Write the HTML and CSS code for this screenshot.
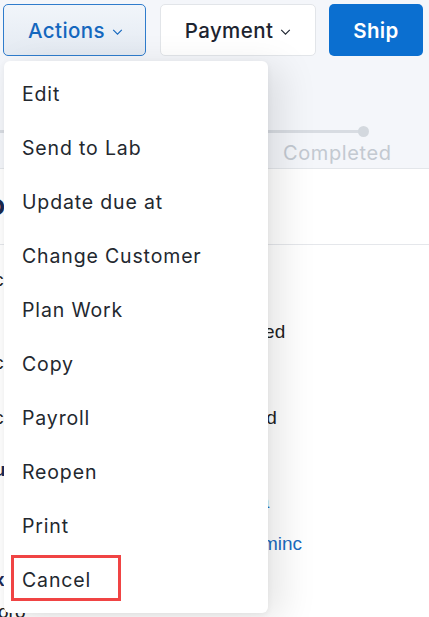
FILE: index.html
```html
<!DOCTYPE html>
<html>
<head>
<meta charset="utf-8">
<link rel="stylesheet" href="styles.css">
</head>
<body>
<div class="page">
  <header class="topbar">
    <div class="toolbar">
      <div class="actions-wrap">
        <button class="btn btn-actions">Actions<svg class="chev" viewBox="0 0 12 7" width="11" height="6"><path d="M1 1l5 5 5-5" fill="none" stroke="currentColor" stroke-width="1.3"/></svg></button>
        <div class="menu">
          <div class="item">Edit</div>
          <div class="item">Send to Lab</div>
          <div class="item">Update due at</div>
          <div class="item">Change Customer</div>
          <div class="item">Plan Work</div>
          <div class="item">Copy</div>
          <div class="item">Payroll</div>
          <div class="item">Reopen</div>
          <div class="item">Print</div>
          <div class="item item-cancel">Cancel<span class="highlight"></span></div>
        </div>
      </div>
      <button class="btn btn-payment">Payment<svg class="chev" viewBox="0 0 12 7" width="11" height="6"><path d="M1 1l5 5 5-5" fill="none" stroke="currentColor" stroke-width="1.3"/></svg></button>
      <button class="btn btn-ship">Ship</button>
    </div>
    <div class="stepper">
      <div class="track"><span class="line"></span><span class="dot"></span></div>
      <div class="step-label">Completed</div>
    </div>
  </header>
  <section class="title-row"><h1 class="title">O</h1></section>
  <section class="details">
    <div class="row r1"><span class="lbl">c</span></div>
    <div class="row r2"><span class="lbl link">t</span><span class="val">Received</span></div>
    <div class="row r3"><span class="lbl">c</span></div>
    <div class="row r4"><span class="lbl">c</span><span class="val">Invoiced</span></div>
    <div class="row r5"><span class="lbl warn">'</span></div>
    <div class="row r6"><span class="lbl navy">u</span></div>
    <div class="row r7"><span class="lbl navy">l</span><span class="val link">Jessica</span></div>
    <div class="row r8"><span class="lbl"></span><span class="val link">labsadminc</span></div>
    <div class="row r9"><span class="lbl navy">x</span></div>
    <div class="row r10"><span class="lbl foot">oro</span></div>
  </section>
</div>
</body>
</html>
```
FILE: styles.css
```css
* { box-sizing: border-box; }
html, body { margin: 0; padding: 0; }
body {
  width: 429px;
  height: 617px;
  overflow: hidden;
  background: #ffffff;
  font-family: Inter, "Noto Sans", sans-serif;
}
.page { width: 429px; }

.topbar {
  background: #f4f6fa;
  border-bottom: 1px solid #e3e6ea;
  height: 169px;
}
.toolbar {
  display: flex;
  padding: 4px 0 0 3px;
  height: 56px;
}
.actions-wrap { position: relative; }
.btn {
  height: 52px;
  border-radius: 5px;
  font-family: Inter, sans-serif;
  font-size: 20.5px;
  font-weight: 500;
  letter-spacing: 0.4px;
  display: flex;
  align-items: center;
  justify-content: center;
  gap: 7px;
  padding: 0;
  cursor: pointer;
}
.btn-actions {
  width: 143px;
  border: 1px solid #2f7ccc;
  background: linear-gradient(180deg, #f1f5fa 0%, #e4eaf2 100%);
  color: #1467be;
  padding-left: 2px;
}
.btn-payment {
  width: 156px;
  margin-left: 14px;
  border: 1px solid #e2e5e9;
  background: #ffffff;
  color: #1d2430;
  padding-left: 0;
}
.btn-ship {
  width: 94px;
  margin-left: 13px;
  border: none;
  background: #0b6fd0;
  color: #ffffff;
  font-weight: 600;
}
.chev { margin-top: 3px; }

.menu {
  position: absolute;
  top: 57px;
  left: 1px;
  width: 264px;
  height: 552px;
  background: #ffffff;
  border-radius: 6px;
  padding: 6px 0;
  box-shadow: 0 2px 6px rgba(0,0,0,0.06), 14px 6px 36px rgba(0,0,0,0.10);
  z-index: 10;
}
.item {
  height: 54px;
  display: flex;
  align-items: center;
  padding-left: 18px;
  font-size: 19.5px;
  letter-spacing: 0.85px;
  color: #23282f;
}
.item-cancel { position: relative; }
.highlight {
  position: absolute;
  left: 7px;
  top: 2px;
  width: 110px;
  height: 46px;
  border: 3px solid #f04444;
}

.stepper {
  height: 112px;
  padding-top: 70px;
}
.track { display: flex; align-items: center; height: 11px; }
.line { display: block; width: 360px; height: 3px; background: #d8dce2; }
.dot {
  display: block;
  width: 11px;
  height: 11px;
  border-radius: 50%;
  background: #d3d8de;
  margin-left: -2px;
}
.step-label {
  padding-left: 283px;
  margin-top: 4px;
  font-size: 20px;
  letter-spacing: 0.6px;
  color: #c3c9d1;
  line-height: 24px;
}

.title-row {
  height: 76px;
  border-bottom: 1px solid #e5e7eb;
  display: flex;
  align-items: center;
}
.title {
  margin: 0 0 0 -12px;
  font-size: 22px;
  font-weight: 800;
  color: #1b2a4e;
}

.details {
  font-family: "Liberation Sans", Arial, sans-serif;
  font-size: 19px;
  color: #222;
}
.row { display: flex; height: 20px; align-items: center; line-height: 20px; }
.lbl { width: 212px; margin-left: -6px; flex: none; white-space: nowrap; }
.val { white-space: nowrap; }
.link { color: #1a6bbf; }
.navy { color: #1b2a55; font-weight: 700; }
.warn { color: #c98a2a; }
.foot { margin-left: -2px; }
.r1 { margin-top: 25px; }
.r2 { margin-top: 32px; }
.r3 { margin-top: 11px; }
.r4 { margin-top: 35px; }
.r5 { margin-top: 2px; }
.r6 { margin-top: 10px; }
.r7 { margin-top: 12px; }
.r8 { margin-top: 22px; }
.r9 { margin-top: 16px; }
.r10 { margin-top: 12px; }
```
